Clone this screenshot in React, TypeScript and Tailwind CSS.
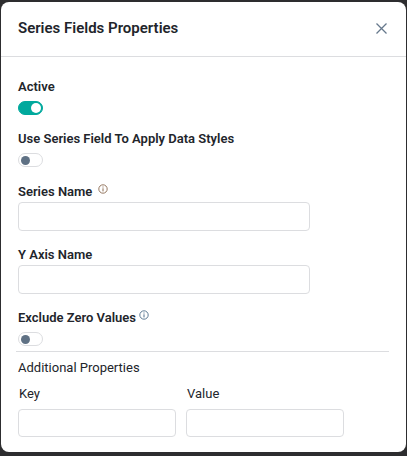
import React, { useId, useState } from 'react';

interface ToggleFieldProps {
    label: string;
    defaultChecked?: boolean;
    info?: boolean;
}

interface TextFieldProps {
    label: string;
    info?: boolean;
}

const inputClass = "block w-full rounded border border-[#dcdde0] bg-white px-2 text-[13px] text-[#22252b] outline-none focus:border-[#00a99d]";

const CloseIcon: React.FC = () => (
    <svg width="11" height="11" viewBox="0 0 11 11" fill="none" stroke="#66788c" strokeWidth="1.3" aria-hidden="true">
        <path d="M0.5 0.5L10.5 10.5M10.5 0.5L0.5 10.5" />
    </svg>
);

const InfoIcon: React.FC<{ color: string }> = ({ color }) => (
    <svg width="10" height="10" viewBox="0 0 10 10" fill="none" stroke={color} aria-hidden="true">
        <circle cx="5" cy="5" r="4.2" strokeWidth="0.9" />
        <path d="M5 4.3V7.4M5 2.5V3.5" strokeWidth="1" />
    </svg>
);

const ToggleField: React.FC<ToggleFieldProps> = ({ label, defaultChecked = false, info }) => {
    const id = useId();
    const [checked, setChecked] = useState(defaultChecked);

    return (
        <div>
            <div className="flex gap-[3px]">
                <label htmlFor={id} className="text-[13px] leading-5 font-semibold">{label}</label>
                {info && <span className="pt-[2px]"><InfoIcon color="#4f6f8a" /></span>}
            </div>
            <input
                id={id}
                type="checkbox"
                role="switch"
                checked={checked}
                onChange={e => setChecked(e.target.checked)}
                className="mt-1 flex h-[14px] w-[25px] cursor-pointer appearance-none items-center rounded-full border border-[#dcdde0] bg-white px-[2px] before:size-[9px] before:rounded-full before:bg-[#5f7184] before:content-[''] checked:justify-end checked:border-[#00a99d] checked:bg-[#00a99d] checked:px-px checked:before:size-[10px] checked:before:bg-white"
            />
        </div>
    );
};

const TextField: React.FC<TextFieldProps> = ({ label, info }) => {
    const id = useId();

    return (
        <div>
            <div className="flex gap-[6px]">
                <label htmlFor={id} className="text-[13px] leading-5 font-semibold">{label}</label>
                {info && <span className="pt-[2px]"><InfoIcon color="#8a6a50" /></span>}
            </div>
            <input id={id} type="text" className={`${inputClass} h-[29px] max-w-[292px]`} />
        </div>
    );
};

const App: React.FC = () => {
    const [isOpen, setIsOpen] = useState(true);

    return (
        <div className="min-h-screen bg-[#2d2d2f] px-px pt-[2px] pb-1 font-['Roboto','Liberation_Sans',sans-serif] text-[#22252b]">
            {isOpen && (
                <section role="dialog" aria-labelledby="dialog-title" className="rounded-lg bg-white">
                    <header className="flex items-center justify-between border-b border-[#dcdde0] pt-[15px] pr-[19px] pb-[17px] pl-[17px]">
                        <h2 id="dialog-title" className="text-[15px] leading-[22px] font-semibold">Series Fields Properties</h2>
                        <button type="button" aria-label="Close" onClick={() => setIsOpen(false)} className="cursor-pointer">
                            <CloseIcon />
                        </button>
                    </header>

                    <div className="px-[17px] pt-5 pb-[15px]">
                        <div className="space-y-[14px]">
                            <ToggleField label="Active" defaultChecked />
                            <ToggleField label="Use Series Field To Apply Data Styles" />
                        </div>
                        <div className="mt-[15px] space-y-[14px]">
                            <TextField label="Series Name" info />
                            <TextField label="Y Axis Name" />
                            <ToggleField label="Exclude Zero Values" info />
                        </div>

                        <hr className="-ml-[2px] mt-[5px] border-[#dcdde0]" />

                        <h3 className="mt-[6px] text-[13px] leading-5">Additional Properties</h3>
                        <div className="mt-[6px] grid max-w-[326px] grid-cols-2 gap-[10px]">
                            <div>
                                <label htmlFor="property-key" className="block px-px text-[13px] leading-5">Key</label>
                                <input id="property-key" type="text" className={`${inputClass} mt-[5px] h-7`} />
                            </div>
                            <div>
                                <label htmlFor="property-value" className="block px-px text-[13px] leading-5">Value</label>
                                <input id="property-value" type="text" className={`${inputClass} mt-[5px] h-7`} />
                            </div>
                        </div>
                    </div>
                </section>
            )}
        </div>
    );
};

export default App;
